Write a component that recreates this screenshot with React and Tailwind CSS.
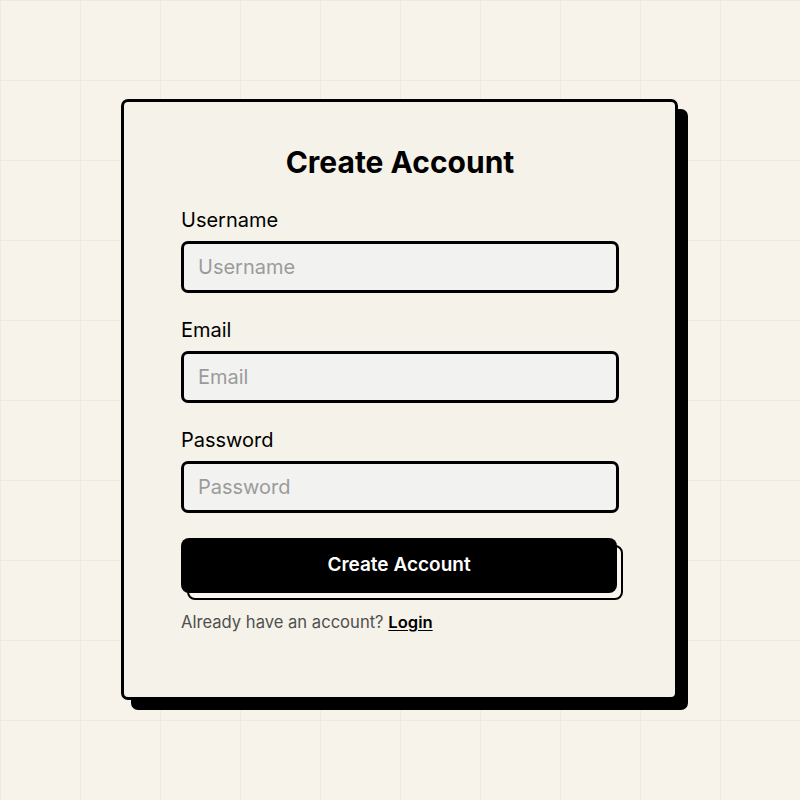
import React from "react";

function Field({ label, type = "text" }) {
  return (
    <div className="flex flex-col">
      <label className="text-[20px] leading-6 text-black mb-[9px]">{label}</label>
      <input
        type={type}
        placeholder={label}
        className="h-[52px] w-[438px] rounded-[7px] border-[3px] border-black bg-[#f2f2f1] px-[14px] text-[20px] text-black placeholder:text-[#9b9b9b] outline-none"
      />
    </div>
  );
}

export default function App() {
  return (
    <div
      className="min-h-screen w-full bg-[#f7f3ea] pt-[99px] pl-[121px] bg-[linear-gradient(to_right,#efeadf_1px,transparent_1px),linear-gradient(to_bottom,#efeadf_1px,transparent_1px)] bg-[size:80px_80px] font-['Inter',sans-serif]"
    >
      <div className="w-[557px] h-[601px] rounded-[7px] border-[3px] border-black bg-[#f5f2e9] shadow-[10px_10px_0_0_#000] pt-[42px] pl-[57px]">
        <h1 className="w-[438px] text-center text-[30px] leading-9 font-bold text-black mb-[28px]">
          Create Account
        </h1>

        <div className="flex flex-col gap-[25px]">
          <Field label="Username" />
          <Field label="Email" type="email" />
          <Field label="Password" type="password" />
        </div>

        {/* button with outlined offset backdrop */}
        <div className="relative mt-[25px] w-[436px] h-[55px]">
          <div className="absolute left-[6px] top-[7px] w-[436px] h-[55px] rounded-[8px] border-2 border-black bg-[#f8f6ef]" />
          <button className="relative w-[436px] h-[55px] rounded-[8px] bg-black text-white text-[19px] font-semibold">
            Create Account
          </button>
        </div>

        <p className="mt-[18px] text-[16.6px] leading-[22px] text-[#4f4f4f]">
          Already have an account?{" "}
          <a href="#" className="font-semibold text-black underline underline-offset-2">
            Login
          </a>
        </p>
      </div>
    </div>
  );
}
